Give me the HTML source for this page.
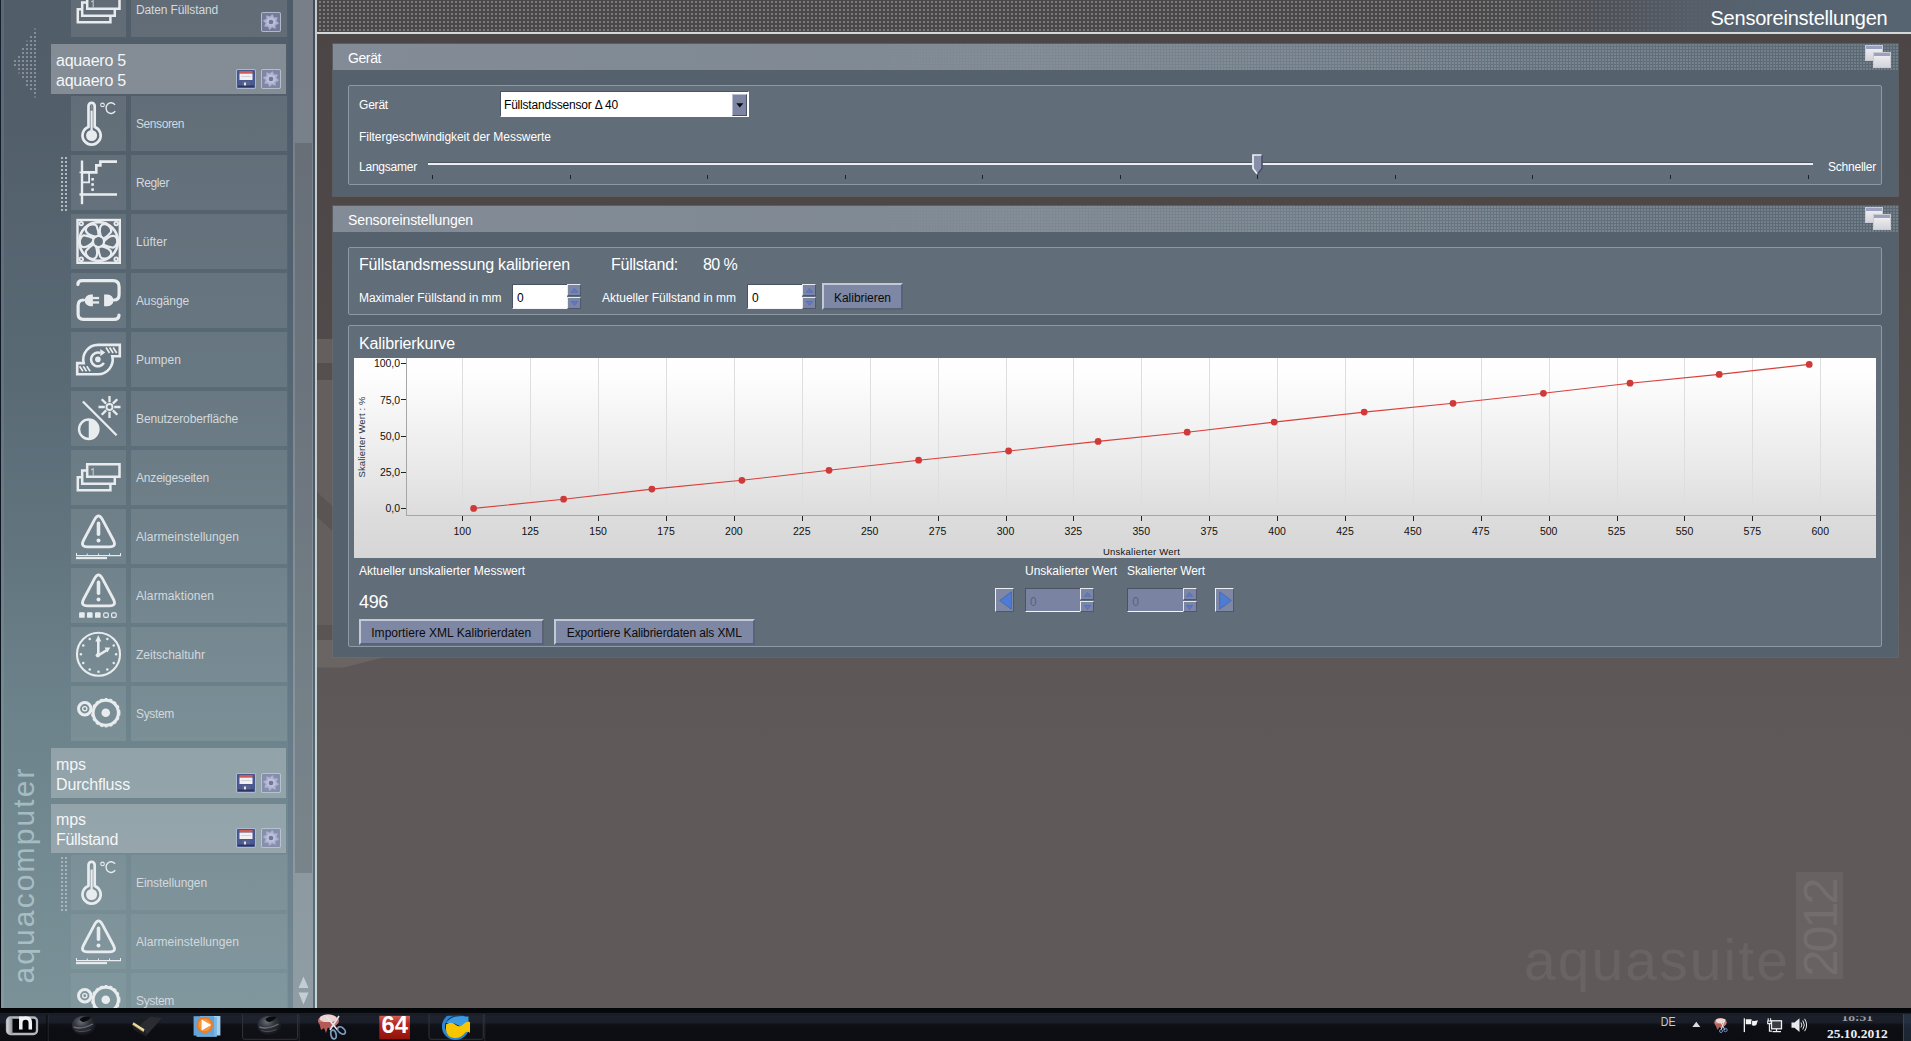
<!DOCTYPE html>
<html><head><meta charset="utf-8"><title>aquasuite 2012</title>
<style>
html,body{margin:0;padding:0;}
body{width:1911px;height:1041px;overflow:hidden;position:relative;background:#5f5a59;font-family:"Liberation Sans",sans-serif;}
.t{position:absolute;white-space:nowrap;line-height:1;font-family:"Liberation Sans",sans-serif;}
.abs{position:absolute;}
svg{position:absolute;overflow:visible;}
</style></head><body>

<div class="abs" style="left:317px;top:0;width:1594px;height:1008px;background:linear-gradient(to bottom,#4b4545 0px,#4d4747 200px,#524c4b 440px,#585352 560px,#5d5857 660px,#5f5a59 780px,#5f5a59 1008px);"></div>
<div style="position:absolute;left:317px;top:339px;width:17px;height:320px;background:#645e5c;"></div>
<div style="position:absolute;left:317px;top:363px;width:17px;height:17px;background:#554f4e;"></div>
<div style="position:absolute;left:317px;top:625px;width:17px;height:16px;background:#5a5453;"></div>
<svg style="left:0;top:0" width="500" height="700" viewBox="0 0 500 700"><path d="M317 640 H334 V657 H385 L344 667.500 H317 Z" fill="#6a6462"/><path d="M317 492 L334 508 V532 L317 517 Z" fill="#5a5453"/></svg>
<div class="abs" style="left:317px;top:0;width:1594px;height:32px;background:linear-gradient(to right,#4a4848 0,#4a4848 1150px,#4f5259 1290px,#555d68 1370px,#566471 1450px);"></div>
<svg style="left:319px;top:1px" width="1592" height="31" viewBox="0 0 1592 31"><defs><pattern id="hd" width="4" height="4" patternUnits="userSpaceOnUse"><rect width="2" height="2" fill="#7b7b7b"/></pattern><linearGradient id="hdg" x1="0" y1="0" x2="1592" y2="0" gradientUnits="userSpaceOnUse"><stop offset="0" stop-color="#fff"/><stop offset="0.74" stop-color="#fff"/><stop offset="0.885" stop-color="#000"/></linearGradient><mask id="hdm"><rect width="1592" height="31" fill="url(#hdg)"/></mask></defs><rect width="1592" height="31" fill="url(#hd)" mask="url(#hdm)"/></svg>
<div style="position:absolute;left:317px;top:32px;width:1594px;height:2px;background:#d3d8d8;"></div>
<div class="t" style="right:23.50px;top:8.07px;font-size:20px;color:#fff;letter-spacing:-0.223px;">Sensoreinstellungen</div>
<div class="abs" style="left:333px;top:44px;width:1565px;height:152px;background:#55626e;box-shadow:0 0 0 1px rgba(105,112,122,0.55);"></div>
<div class="abs" style="left:333px;top:44px;width:1565px;height:26px;background:linear-gradient(to right,#828b96 0,#7f8994 700px,#64727d 1200px,#596773 1565px);"></div>
<div class="abs" style="left:333px;top:44px;width:1565px;height:26px;background-image:radial-gradient(circle at 1px 1px,rgba(255,255,255,0.145) 0.9px,rgba(255,255,255,0) 1.1px);background-size:3px 3px;-webkit-mask-image:linear-gradient(to right,transparent 0,transparent 500px,#000 1100px);mask-image:linear-gradient(to right,transparent 0,transparent 500px,#000 1100px);"></div>
<div class="t" style="left:348.00px;top:51.15px;font-size:14px;color:#fff;letter-spacing:-0.403px;">Gerät</div>
<svg style="left:1865px;top:45px" width="26" height="24" viewBox="0 0 26 24"><defs><linearGradient id="wg44" x1="0" y1="0" x2="0" y2="1"><stop offset="0" stop-color="#f4f4f6"/><stop offset="1" stop-color="#d2d3d8"/></linearGradient></defs><rect x="0.5" y="0.5" width="17" height="15" fill="url(#wg44)" stroke="#c9cad2" stroke-width="1"/><rect x="1" y="1" width="16" height="3" fill="#9aa0bd"/><rect x="8.5" y="7.5" width="17" height="15" fill="url(#wg44)" stroke="#c9cad2" stroke-width="1"/><rect x="9" y="8" width="16" height="3" fill="#9aa0bd"/></svg>
<div class="abs" style="left:348px;top:85px;width:1534px;height:100px;box-sizing:border-box;background:#616d79;border:1px solid #8d9aa5;border-radius:2px;"></div>
<div class="abs" style="left:333px;top:206px;width:1565px;height:451px;background:#55626e;box-shadow:0 0 0 1px rgba(105,112,122,0.55);"></div>
<div class="abs" style="left:333px;top:206px;width:1565px;height:26px;background:linear-gradient(to right,#828b96 0,#7f8994 700px,#64727d 1200px,#596773 1565px);"></div>
<div class="abs" style="left:333px;top:206px;width:1565px;height:26px;background-image:radial-gradient(circle at 1px 1px,rgba(255,255,255,0.145) 0.9px,rgba(255,255,255,0) 1.1px);background-size:3px 3px;-webkit-mask-image:linear-gradient(to right,transparent 0,transparent 500px,#000 1100px);mask-image:linear-gradient(to right,transparent 0,transparent 500px,#000 1100px);"></div>
<div class="t" style="left:348.00px;top:213.15px;font-size:14px;color:#fff;letter-spacing:-0.098px;">Sensoreinstellungen</div>
<svg style="left:1865px;top:207px" width="26" height="24" viewBox="0 0 26 24"><defs><linearGradient id="wg206" x1="0" y1="0" x2="0" y2="1"><stop offset="0" stop-color="#f4f4f6"/><stop offset="1" stop-color="#d2d3d8"/></linearGradient></defs><rect x="0.5" y="0.5" width="17" height="15" fill="url(#wg206)" stroke="#c9cad2" stroke-width="1"/><rect x="1" y="1" width="16" height="3" fill="#9aa0bd"/><rect x="8.5" y="7.5" width="17" height="15" fill="url(#wg206)" stroke="#c9cad2" stroke-width="1"/><rect x="9" y="8" width="16" height="3" fill="#9aa0bd"/></svg>
<div class="abs" style="left:348px;top:247px;width:1534px;height:68px;box-sizing:border-box;background:#616d79;border:1px solid #8d9aa5;border-radius:2px;"></div>
<div class="abs" style="left:348px;top:325px;width:1534px;height:322px;box-sizing:border-box;background:#616d79;border:1px solid #8d9aa5;border-radius:2px;"></div>
<div class="t" style="left:359.00px;top:99.44px;font-size:12px;color:#fff;letter-spacing:-0.202px;">Gerät</div>
<div class="abs" style="left:499.600px;top:91.300px;width:249px;height:25.800px;box-sizing:border-box;background:#fff;border-top:1.600px solid #4a5266;border-left:1.600px solid #4a5266;border-right:1.500px solid #fff;border-bottom:1.500px solid #fff;"></div>
<div class="abs" style="left:731.900px;top:93.600px;width:14.900px;height:22px;box-sizing:border-box;background:#7c85a2;border:1.300px solid #b9bfd0;border-right:1.600px solid #4a5068;border-bottom:1.600px solid #4a5068;"></div>
<svg style="left:735.600px;top:102.800px" width="8" height="5" viewBox="0 0 8 5"><path d="M0.300 0.300 L7.300 0.300 L3.800 4.500 Z" fill="#0a0a0a"/></svg>
<div class="t" style="left:504.00px;top:99.44px;font-size:12px;color:#000;letter-spacing:-0.194px;">Füllstandssensor Δ 40</div>
<div class="t" style="left:359.00px;top:130.84px;font-size:12px;color:#fff;letter-spacing:-0.040px;">Filtergeschwindigkeit der Messwerte</div>
<div class="t" style="left:359.00px;top:161.34px;font-size:12px;color:#fff;letter-spacing:-0.226px;">Langsamer</div>
<div class="t" style="left:1828.00px;top:161.34px;font-size:12px;color:#fff;letter-spacing:-0.225px;">Schneller</div>
<div style="position:absolute;left:428px;top:161.7px;width:1385px;height:1.3px;background:#4a5462;"></div>
<div style="position:absolute;left:428px;top:163px;width:1385px;height:1.7px;background:#eaedf1;"></div>
<div style="position:absolute;left:432px;top:175px;width:1px;height:4px;background:#1d2228;"></div>
<div style="position:absolute;left:569.55px;top:175px;width:1px;height:4px;background:#1d2228;"></div>
<div style="position:absolute;left:707.1px;top:175px;width:1px;height:4px;background:#1d2228;"></div>
<div style="position:absolute;left:844.65px;top:175px;width:1px;height:4px;background:#1d2228;"></div>
<div style="position:absolute;left:982.2px;top:175px;width:1px;height:4px;background:#1d2228;"></div>
<div style="position:absolute;left:1119.75px;top:175px;width:1px;height:4px;background:#1d2228;"></div>
<div style="position:absolute;left:1257.3px;top:175px;width:1px;height:4px;background:#1d2228;"></div>
<div style="position:absolute;left:1394.85px;top:175px;width:1px;height:4px;background:#1d2228;"></div>
<div style="position:absolute;left:1532.4px;top:175px;width:1px;height:4px;background:#1d2228;"></div>
<div style="position:absolute;left:1669.95px;top:175px;width:1px;height:4px;background:#1d2228;"></div>
<div style="position:absolute;left:1807.5px;top:175px;width:1px;height:4px;background:#1d2228;"></div>
<svg style="left:1252px;top:154px" width="11" height="21" viewBox="0 0 11 21"><path d="M0.800 0.800 H10 V14.500 L5.300 20.300 L0.800 14.500 Z" fill="#868ea8"/><path d="M10 1 V14.500 L5.300 20.300" fill="none" stroke="#4a5069" stroke-width="1.600"/><path d="M9.500 1 H1 V14.500 L5 19.800" fill="none" stroke="#eef0f6" stroke-width="1.700"/></svg>
<div class="t" style="left:359.00px;top:257.46px;font-size:16px;color:#fff;letter-spacing:-0.176px;">Füllstandsmessung kalibrieren</div>
<div class="t" style="left:611.00px;top:257.46px;font-size:16px;color:#fff;letter-spacing:-0.237px;">Füllstand:</div>
<div class="t" style="left:703.00px;top:257.46px;font-size:16px;color:#fff;letter-spacing:-0.617px;">80 %</div>
<div class="t" style="left:359.00px;top:291.84px;font-size:12px;color:#fff;letter-spacing:-0.035px;">Maximaler Füllstand in mm</div>
<div class="t" style="left:602.00px;top:291.84px;font-size:12px;color:#fff;letter-spacing:-0.029px;">Aktueller Füllstand in mm</div>
<div class="abs" style="left:512.3px;top:284.4px;width:54.9px;height:24.4px;box-sizing:border-box;background:#fff;border-top:1.600px solid #4a5266;border-left:1.600px solid #4a5266;border-bottom:1.400px solid #f2f4f8;border-right:0;"></div>
<div class="t" style="left:517.10px;top:291.94px;font-size:12px;color:#000;letter-spacing:-0.174px;">0</div>
<div class="abs" style="left:567.2px;top:284.4px;width:14.1px;height:11.6px;box-sizing:border-box;background:#7c86a4;border:1.500px solid #e6e9f0;border-right-color:#50576f;border-bottom-color:#50576f;"></div>
<svg style="left:570.7px;top:288px" width="7" height="5" viewBox="0 0 7 5"><path d="M0.300 4.300 L3.500 0.400 L6.700 4.300 Z" fill="#5b7bd0" stroke="#4763b0" stroke-width="0.500"/></svg>
<div class="abs" style="left:567.2px;top:297.2px;width:14.1px;height:11.6px;box-sizing:border-box;background:#7c86a4;border:1.500px solid #e6e9f0;border-right-color:#50576f;border-bottom-color:#50576f;"></div>
<svg style="left:570.7px;top:301px" width="7" height="5" viewBox="0 0 7 5"><path d="M0.300 0.500 L3.500 4.400 L6.700 0.500 Z" fill="#5b7bd0" stroke="#4763b0" stroke-width="0.500"/></svg>
<div class="abs" style="left:747.3px;top:284.4px;width:54.9px;height:24.4px;box-sizing:border-box;background:#fff;border-top:1.600px solid #4a5266;border-left:1.600px solid #4a5266;border-bottom:1.400px solid #f2f4f8;border-right:0;"></div>
<div class="t" style="left:752.10px;top:291.94px;font-size:12px;color:#000;letter-spacing:-0.174px;">0</div>
<div class="abs" style="left:802.2px;top:284.4px;width:14.1px;height:11.6px;box-sizing:border-box;background:#7c86a4;border:1.500px solid #e6e9f0;border-right-color:#50576f;border-bottom-color:#50576f;"></div>
<svg style="left:805.7px;top:288px" width="7" height="5" viewBox="0 0 7 5"><path d="M0.300 4.300 L3.500 0.400 L6.700 4.300 Z" fill="#5b7bd0" stroke="#4763b0" stroke-width="0.500"/></svg>
<div class="abs" style="left:802.2px;top:297.2px;width:14.1px;height:11.6px;box-sizing:border-box;background:#7c86a4;border:1.500px solid #e6e9f0;border-right-color:#50576f;border-bottom-color:#50576f;"></div>
<svg style="left:805.7px;top:301px" width="7" height="5" viewBox="0 0 7 5"><path d="M0.300 0.500 L3.500 4.400 L6.700 0.500 Z" fill="#5b7bd0" stroke="#4763b0" stroke-width="0.500"/></svg>
<div class="abs" style="left:822px;top:283px;width:81px;height:27px;box-sizing:border-box;background:#7e87a4;border:2px solid #c3c8d6;border-right-color:#5a6179;border-bottom-color:#5a6179;"></div>
<div class="t" style="left:834.00px;top:291.64px;font-size:12px;color:#0b0b0b;letter-spacing:-0.033px;">Kalibrieren</div>
<div class="t" style="left:359.00px;top:335.96px;font-size:16px;color:#fff;letter-spacing:-0.129px;">Kalibrierkurve</div>
<div class="abs" style="left:354px;top:358px;width:1522px;height:200px;background:linear-gradient(to bottom,#ffffff 0,#fdfdfd 20px,#e9e9e9 110px,#dcdcdc 160px,#d6d6d6 200px);"></div>
<svg style="left:0;top:0" width="1911" height="1041" viewBox="0 0 1911 1041"><line x1="462.5" y1="358" x2="462.5" y2="515.5" stroke="#dedede" stroke-width="1"/><line x1="462.5" y1="516" x2="462.5" y2="521" stroke="#222" stroke-width="1"/><line x1="530.5" y1="358" x2="530.5" y2="515.5" stroke="#dedede" stroke-width="1"/><line x1="530.5" y1="516" x2="530.5" y2="521" stroke="#222" stroke-width="1"/><line x1="598.5" y1="358" x2="598.5" y2="515.5" stroke="#dedede" stroke-width="1"/><line x1="598.5" y1="516" x2="598.5" y2="521" stroke="#222" stroke-width="1"/><line x1="666.5" y1="358" x2="666.5" y2="515.5" stroke="#dedede" stroke-width="1"/><line x1="666.5" y1="516" x2="666.5" y2="521" stroke="#222" stroke-width="1"/><line x1="734.5" y1="358" x2="734.5" y2="515.5" stroke="#dedede" stroke-width="1"/><line x1="734.5" y1="516" x2="734.5" y2="521" stroke="#222" stroke-width="1"/><line x1="802.5" y1="358" x2="802.5" y2="515.5" stroke="#dedede" stroke-width="1"/><line x1="802.5" y1="516" x2="802.5" y2="521" stroke="#222" stroke-width="1"/><line x1="870.5" y1="358" x2="870.5" y2="515.5" stroke="#dedede" stroke-width="1"/><line x1="870.5" y1="516" x2="870.5" y2="521" stroke="#222" stroke-width="1"/><line x1="938.5" y1="358" x2="938.5" y2="515.5" stroke="#dedede" stroke-width="1"/><line x1="938.5" y1="516" x2="938.5" y2="521" stroke="#222" stroke-width="1"/><line x1="1006.5" y1="358" x2="1006.5" y2="515.5" stroke="#dedede" stroke-width="1"/><line x1="1006.5" y1="516" x2="1006.5" y2="521" stroke="#222" stroke-width="1"/><line x1="1073.5" y1="358" x2="1073.5" y2="515.5" stroke="#dedede" stroke-width="1"/><line x1="1073.5" y1="516" x2="1073.5" y2="521" stroke="#222" stroke-width="1"/><line x1="1141.5" y1="358" x2="1141.5" y2="515.5" stroke="#dedede" stroke-width="1"/><line x1="1141.5" y1="516" x2="1141.5" y2="521" stroke="#222" stroke-width="1"/><line x1="1209.5" y1="358" x2="1209.5" y2="515.5" stroke="#dedede" stroke-width="1"/><line x1="1209.5" y1="516" x2="1209.5" y2="521" stroke="#222" stroke-width="1"/><line x1="1277.5" y1="358" x2="1277.5" y2="515.5" stroke="#dedede" stroke-width="1"/><line x1="1277.5" y1="516" x2="1277.5" y2="521" stroke="#222" stroke-width="1"/><line x1="1345.5" y1="358" x2="1345.5" y2="515.5" stroke="#dedede" stroke-width="1"/><line x1="1345.5" y1="516" x2="1345.5" y2="521" stroke="#222" stroke-width="1"/><line x1="1413.5" y1="358" x2="1413.5" y2="515.5" stroke="#dedede" stroke-width="1"/><line x1="1413.5" y1="516" x2="1413.5" y2="521" stroke="#222" stroke-width="1"/><line x1="1481.5" y1="358" x2="1481.5" y2="515.5" stroke="#dedede" stroke-width="1"/><line x1="1481.5" y1="516" x2="1481.5" y2="521" stroke="#222" stroke-width="1"/><line x1="1549.5" y1="358" x2="1549.5" y2="515.5" stroke="#dedede" stroke-width="1"/><line x1="1549.5" y1="516" x2="1549.5" y2="521" stroke="#222" stroke-width="1"/><line x1="1617.5" y1="358" x2="1617.5" y2="515.5" stroke="#dedede" stroke-width="1"/><line x1="1617.5" y1="516" x2="1617.5" y2="521" stroke="#222" stroke-width="1"/><line x1="1684.5" y1="358" x2="1684.5" y2="515.5" stroke="#dedede" stroke-width="1"/><line x1="1684.5" y1="516" x2="1684.5" y2="521" stroke="#222" stroke-width="1"/><line x1="1752.5" y1="358" x2="1752.5" y2="515.5" stroke="#dedede" stroke-width="1"/><line x1="1752.5" y1="516" x2="1752.5" y2="521" stroke="#222" stroke-width="1"/><line x1="1820.5" y1="358" x2="1820.5" y2="515.5" stroke="#dedede" stroke-width="1"/><line x1="1820.5" y1="516" x2="1820.5" y2="521" stroke="#222" stroke-width="1"/><line x1="406.5" y1="358" x2="406.5" y2="516" stroke="#a6a6a6" stroke-width="1"/><line x1="406" y1="515.5" x2="1876" y2="515.5" stroke="#a6a6a6" stroke-width="1"/><line x1="401" y1="508.5" x2="406" y2="508.5" stroke="#222" stroke-width="1"/><line x1="401" y1="472.5" x2="406" y2="472.5" stroke="#222" stroke-width="1"/><line x1="401" y1="436.5" x2="406" y2="436.5" stroke="#222" stroke-width="1"/><line x1="401" y1="399.5" x2="406" y2="399.5" stroke="#222" stroke-width="1"/><line x1="401" y1="363.5" x2="406" y2="363.5" stroke="#222" stroke-width="1"/><polyline fill="none" stroke="#d8403c" stroke-width="1.1" points="473.6,508.4 563.6,499.2 651.9,489.1 741.9,480.3 829.0,470.3 918.6,460.2 1008.6,451.0 1098.1,441.4 1187.2,432.2 1274.2,422.1 1364.2,412.1 1453.0,403.3 1543.4,393.3 1630.0,383.2 1719.2,374.4 1809.2,364.4"/><circle cx="473.6" cy="508.4" r="3.4" fill="#cf3a38"/><circle cx="563.6" cy="499.2" r="3.4" fill="#cf3a38"/><circle cx="651.9" cy="489.1" r="3.4" fill="#cf3a38"/><circle cx="741.9" cy="480.3" r="3.4" fill="#cf3a38"/><circle cx="829.0" cy="470.3" r="3.4" fill="#cf3a38"/><circle cx="918.6" cy="460.2" r="3.4" fill="#cf3a38"/><circle cx="1008.6" cy="451.0" r="3.4" fill="#cf3a38"/><circle cx="1098.1" cy="441.4" r="3.4" fill="#cf3a38"/><circle cx="1187.2" cy="432.2" r="3.4" fill="#cf3a38"/><circle cx="1274.2" cy="422.1" r="3.4" fill="#cf3a38"/><circle cx="1364.2" cy="412.1" r="3.4" fill="#cf3a38"/><circle cx="1453.0" cy="403.3" r="3.4" fill="#cf3a38"/><circle cx="1543.4" cy="393.3" r="3.4" fill="#cf3a38"/><circle cx="1630.0" cy="383.2" r="3.4" fill="#cf3a38"/><circle cx="1719.2" cy="374.4" r="3.4" fill="#cf3a38"/><circle cx="1809.2" cy="364.4" r="3.4" fill="#cf3a38"/></svg>
<div class="t" style="left:453.50px;top:526.11px;font-size:10.5px;color:#111;letter-spacing:0.027px;">100</div>
<div class="t" style="left:521.40px;top:526.11px;font-size:10.5px;color:#111;letter-spacing:0.027px;">125</div>
<div class="t" style="left:589.30px;top:526.11px;font-size:10.5px;color:#111;letter-spacing:0.027px;">150</div>
<div class="t" style="left:657.20px;top:526.11px;font-size:10.5px;color:#111;letter-spacing:0.027px;">175</div>
<div class="t" style="left:725.10px;top:526.11px;font-size:10.5px;color:#111;letter-spacing:0.027px;">200</div>
<div class="t" style="left:793.00px;top:526.11px;font-size:10.5px;color:#111;letter-spacing:0.027px;">225</div>
<div class="t" style="left:860.90px;top:526.11px;font-size:10.5px;color:#111;letter-spacing:0.027px;">250</div>
<div class="t" style="left:928.80px;top:526.11px;font-size:10.5px;color:#111;letter-spacing:0.027px;">275</div>
<div class="t" style="left:996.70px;top:526.11px;font-size:10.5px;color:#111;letter-spacing:0.027px;">300</div>
<div class="t" style="left:1064.60px;top:526.11px;font-size:10.5px;color:#111;letter-spacing:0.027px;">325</div>
<div class="t" style="left:1132.50px;top:526.11px;font-size:10.5px;color:#111;letter-spacing:0.027px;">350</div>
<div class="t" style="left:1200.40px;top:526.11px;font-size:10.5px;color:#111;letter-spacing:0.027px;">375</div>
<div class="t" style="left:1268.30px;top:526.11px;font-size:10.5px;color:#111;letter-spacing:0.027px;">400</div>
<div class="t" style="left:1336.20px;top:526.11px;font-size:10.5px;color:#111;letter-spacing:0.027px;">425</div>
<div class="t" style="left:1404.10px;top:526.11px;font-size:10.5px;color:#111;letter-spacing:0.027px;">450</div>
<div class="t" style="left:1472.00px;top:526.11px;font-size:10.5px;color:#111;letter-spacing:0.027px;">475</div>
<div class="t" style="left:1539.90px;top:526.11px;font-size:10.5px;color:#111;letter-spacing:0.027px;">500</div>
<div class="t" style="left:1607.80px;top:526.11px;font-size:10.5px;color:#111;letter-spacing:0.027px;">525</div>
<div class="t" style="left:1675.70px;top:526.11px;font-size:10.5px;color:#111;letter-spacing:0.027px;">550</div>
<div class="t" style="left:1743.60px;top:526.11px;font-size:10.5px;color:#111;letter-spacing:0.027px;">575</div>
<div class="t" style="left:1811.50px;top:526.11px;font-size:10.5px;color:#111;letter-spacing:0.027px;">600</div>
<div class="t" style="left:385.40px;top:503.11px;font-size:10.5px;color:#111;letter-spacing:0.001px;">0,0</div>
<div class="t" style="left:380.00px;top:466.91px;font-size:10.5px;color:#111;letter-spacing:-0.109px;">25,0</div>
<div class="t" style="left:380.00px;top:430.71px;font-size:10.5px;color:#111;letter-spacing:-0.109px;">50,0</div>
<div class="t" style="left:380.00px;top:394.51px;font-size:10.5px;color:#111;letter-spacing:-0.109px;">75,0</div>
<div class="t" style="left:374.00px;top:358.31px;font-size:10.5px;color:#111;letter-spacing:-0.055px;">100,0</div>
<div class="t" style="left:1103.00px;top:546.96px;font-size:9.5px;color:#111;letter-spacing:0.223px;">Unskalierter Wert</div>
<div class="t" style="left:361.5px;top:437px;font-size:9.5px;color:#2c343d;transform:translate(-50%,-50%) rotate(-90deg);letter-spacing:0.1px;">Skalierter Wert : %</div>
<div class="t" style="left:359.00px;top:565.34px;font-size:12px;color:#fff;letter-spacing:-0.023px;">Aktueller unskalierter Messwert</div>
<div class="t" style="left:359.00px;top:592.76px;font-size:18px;color:#fff;letter-spacing:-0.344px;">496</div>
<div class="abs" style="left:359px;top:618.5px;width:184.5px;height:26.5px;box-sizing:border-box;background:#7e87a4;border:2px solid #c3c8d6;border-right-color:#5a6179;border-bottom-color:#5a6179;"></div>
<div class="t" style="left:371.25px;top:626.89px;font-size:12px;color:#0b0b0b;letter-spacing:0.036px;">Importiere XML Kalibrierdaten</div>
<div class="abs" style="left:554px;top:618.5px;width:200.5px;height:26.5px;box-sizing:border-box;background:#7e87a4;border:2px solid #c3c8d6;border-right-color:#5a6179;border-bottom-color:#5a6179;"></div>
<div class="t" style="left:566.75px;top:626.89px;font-size:12px;color:#0b0b0b;letter-spacing:-0.114px;">Exportiere Kalibrierdaten als XML</div>
<div class="t" style="left:1025.00px;top:565.34px;font-size:12px;color:#fff;letter-spacing:-0.027px;">Unskalierter Wert</div>
<div class="t" style="left:1127.00px;top:565.34px;font-size:12px;color:#fff;letter-spacing:-0.075px;">Skalierter Wert</div>
<div class="abs" style="left:995.4px;top:588.2px;width:19.1px;height:23.9px;box-sizing:border-box;background:#7e87a4;border:1.800px solid #eceff5;border-right-color:#50576f;border-bottom-color:#50576f;"></div>
<svg style="left:998.6px;top:591px" width="13" height="19" viewBox="0 0 13 19"><path d="M12.300 0.800 L12.300 18.200 L0.700 9.500 Z" fill="#4f7cd2" stroke="#3f63b4" stroke-width="0.800"/></svg>
<div class="abs" style="left:1025.2px;top:588.2px;width:55.2px;height:24.2px;box-sizing:border-box;background:#7a84a2;border-top:1.600px solid #4a5266;border-left:1.600px solid #4a5266;border-bottom:1.400px solid #f2f4f8;border-right:0;"></div>
<div class="t" style="left:1030.00px;top:595.54px;font-size:12px;color:#586289;letter-spacing:-0.174px;">0</div>
<div class="abs" style="left:1080.4px;top:588.2px;width:14.1px;height:11.5px;box-sizing:border-box;background:#7c86a4;border:1.500px solid #e6e9f0;border-right-color:#50576f;border-bottom-color:#50576f;"></div>
<svg style="left:1083.9px;top:591.8px" width="7" height="5" viewBox="0 0 7 5"><path d="M0.300 4.300 L3.500 0.400 L6.700 4.300 Z" fill="#5b7bd0" stroke="#4763b0" stroke-width="0.500"/></svg>
<div class="abs" style="left:1080.4px;top:600.9px;width:14.1px;height:11.5px;box-sizing:border-box;background:#7c86a4;border:1.500px solid #e6e9f0;border-right-color:#50576f;border-bottom-color:#50576f;"></div>
<svg style="left:1083.9px;top:604.7px" width="7" height="5" viewBox="0 0 7 5"><path d="M0.300 0.500 L3.500 4.400 L6.700 0.500 Z" fill="#5b7bd0" stroke="#4763b0" stroke-width="0.500"/></svg>
<div class="abs" style="left:1127.4px;top:588.2px;width:55.2px;height:24.2px;box-sizing:border-box;background:#7a84a2;border-top:1.600px solid #4a5266;border-left:1.600px solid #4a5266;border-bottom:1.400px solid #f2f4f8;border-right:0;"></div>
<div class="t" style="left:1132.20px;top:595.54px;font-size:12px;color:#586289;letter-spacing:-0.174px;">0</div>
<div class="abs" style="left:1182.6px;top:588.2px;width:14.1px;height:11.5px;box-sizing:border-box;background:#7c86a4;border:1.500px solid #e6e9f0;border-right-color:#50576f;border-bottom-color:#50576f;"></div>
<svg style="left:1186.1px;top:591.8px" width="7" height="5" viewBox="0 0 7 5"><path d="M0.300 4.300 L3.500 0.400 L6.700 4.300 Z" fill="#5b7bd0" stroke="#4763b0" stroke-width="0.500"/></svg>
<div class="abs" style="left:1182.6px;top:600.9px;width:14.1px;height:11.5px;box-sizing:border-box;background:#7c86a4;border:1.500px solid #e6e9f0;border-right-color:#50576f;border-bottom-color:#50576f;"></div>
<svg style="left:1186.1px;top:604.7px" width="7" height="5" viewBox="0 0 7 5"><path d="M0.300 0.500 L3.500 4.400 L6.700 0.500 Z" fill="#5b7bd0" stroke="#4763b0" stroke-width="0.500"/></svg>
<div class="abs" style="left:1214.9px;top:588.2px;width:19.6px;height:23.9px;box-sizing:border-box;background:#7e87a4;border:1.800px solid #eceff5;border-right-color:#50576f;border-bottom-color:#50576f;"></div>
<svg style="left:1218.5px;top:591px" width="13" height="19" viewBox="0 0 13 19"><path d="M0.700 0.800 L0.700 18.200 L12.300 9.500 Z" fill="#4f7cd2" stroke="#3f63b4" stroke-width="0.800"/></svg>
<div class="t" style="left:1524.00px;top:931.75px;font-size:57px;color:rgba(255,255,255,0.062);letter-spacing:2.088px;font-weight:normal;">aquasuite</div>
<div style="position:absolute;left:1796px;top:872px;width:47px;height:107px;background:rgba(255,255,255,0.06);"></div>
<svg style="left:0;top:0" width="1911" height="1008" viewBox="0 0 1911 1008"><text transform="translate(1836.500 976.500) rotate(-90)" font-family="Liberation Sans, sans-serif" font-size="48.500" fill="rgba(255,255,255,0.075)" textLength="99" lengthAdjust="spacing">2012</text></svg>
<div class="abs" style="left:0;top:0;width:317px;height:1008px;background:linear-gradient(to bottom,#515d69 0,#525f6b 120px,#596a75 380px,#62757f 550px,#6d838c 720px,#758b93 880px,#7a9198 1008px);"></div>
<div style="position:absolute;left:0px;top:0px;width:1px;height:1008px;background:linear-gradient(to bottom,#142030,#060b12);"></div>
<div style="position:absolute;left:1px;top:0px;width:3px;height:1008px;background:rgba(255,255,255,0.07);"></div>
<div style="position:absolute;left:287.5px;top:0px;width:5.5px;height:1008px;background:rgba(60,80,105,0.130);"></div>
<div style="position:absolute;left:293px;top:0px;width:20.2px;height:1008px;background:rgba(175,175,182,0.420);"></div>
<div style="position:absolute;left:295px;top:143px;width:17px;height:730px;background:rgba(0,0,0,0.135);"></div>
<div style="position:absolute;left:313.2px;top:0px;width:1.5px;height:1008px;background:rgba(40,50,60,0.350);"></div>
<div style="position:absolute;left:314.7px;top:0px;width:2.5px;height:1008px;background:linear-gradient(to bottom,#c5c9cd,#c3d5d7);"></div>
<svg style="left:298px;top:976px" width="11" height="30" viewBox="0 0 11 30"><path d="M0.500 12 L5.500 0.500 L10.500 12 Z" fill="#c3ced3"/><path d="M0.500 16.500 L5.500 28.500 L10.500 16.500 Z" fill="#c3ced3"/></svg>
<div style="position:absolute;left:71px;top:-18px;width:55px;height:55px;background:rgba(255,255,255,0.095);"></div>
<div style="position:absolute;left:131px;top:-18px;width:155.5px;height:55px;background:rgba(255,255,255,0.095);"></div>
<div class="t" style="left:136.00px;top:4.34px;font-size:12px;color:#d3d9dd;letter-spacing:-0.136px;">Daten Füllstand</div>
<svg style="left:71px;top:-18px" width="55" height="55" viewBox="0 0 55 55"><g fill="none" stroke="#e9ecee" stroke-width="2.500" stroke-linejoin="miter">
<path d="M16.200 14.200 H48.500 V26.800 H16.200 Z"/>
<path d="M16.200 20.500 H11.200 V33.700 H43.800 V26.800"/>
<path d="M11.200 27.300 H6.800 V40.300 H39.400 V33.700"/></g>
<path d="M20.200 20 l2 -1.400 v6.800" fill="none" stroke="#e9ecee" stroke-width="1.100" opacity="0.700"/></svg>
<div class="abs" style="left:261px;top:12px;width:20px;height:20px;box-sizing:border-box;background:rgba(125,130,172,0.620);border:1px solid rgba(215,228,235,0.600);border-radius:2px;"></div>
<svg style="left:261px;top:12px" width="20" height="20" viewBox="0 0 20 20"><polygon points="17.07,11.37 13.84,12.54 14.03,15.97 10.92,14.51 8.63,17.07 7.46,13.84 4.03,14.03 5.49,10.92 2.93,8.63 6.16,7.46 5.97,4.03 9.08,5.49 11.37,2.93 12.54,6.16 15.97,5.97 14.51,9.08" fill="#c6c7df" stroke="#b0b4d2" stroke-width="1.400" opacity="0.900" stroke-linejoin="round"/><circle cx="10" cy="10" r="2.300" fill="#6f77a0"/></svg>
<svg style="left:0;top:0" width="60" height="110" viewBox="0 0 60 110" shape-rendering="crispEdges"><rect x="34" y="28" width="2" height="2" fill="rgba(255,255,255,0.16)"/><rect x="34" y="32" width="2" height="2" fill="rgba(255,255,255,0.30)"/><rect x="34" y="36" width="2" height="2" fill="rgba(255,255,255,0.30)"/><rect x="34" y="40" width="2" height="2" fill="rgba(255,255,255,0.30)"/><rect x="34" y="44" width="2" height="2" fill="rgba(255,255,255,0.30)"/><rect x="34" y="48" width="2" height="2" fill="rgba(255,255,255,0.30)"/><rect x="34" y="52" width="2" height="2" fill="rgba(255,255,255,0.30)"/><rect x="34" y="56" width="2" height="2" fill="rgba(255,255,255,0.30)"/><rect x="34" y="60" width="2" height="2" fill="rgba(255,255,255,0.30)"/><rect x="34" y="64" width="2" height="2" fill="rgba(255,255,255,0.30)"/><rect x="34" y="68" width="2" height="2" fill="rgba(255,255,255,0.30)"/><rect x="34" y="72" width="2" height="2" fill="rgba(255,255,255,0.30)"/><rect x="34" y="76" width="2" height="2" fill="rgba(255,255,255,0.30)"/><rect x="34" y="80" width="2" height="2" fill="rgba(255,255,255,0.30)"/><rect x="34" y="84" width="2" height="2" fill="rgba(255,255,255,0.30)"/><rect x="34" y="88" width="2" height="2" fill="rgba(255,255,255,0.30)"/><rect x="34" y="92" width="2" height="2" fill="rgba(255,255,255,0.30)"/><rect x="34" y="96" width="2" height="2" fill="rgba(255,255,255,0.16)"/><rect x="30" y="36" width="2" height="2" fill="rgba(255,255,255,0.30)"/><rect x="30" y="40" width="2" height="2" fill="rgba(255,255,255,0.30)"/><rect x="30" y="44" width="2" height="2" fill="rgba(255,255,255,0.30)"/><rect x="30" y="48" width="2" height="2" fill="rgba(255,255,255,0.30)"/><rect x="30" y="52" width="2" height="2" fill="rgba(255,255,255,0.30)"/><rect x="30" y="56" width="2" height="2" fill="rgba(255,255,255,0.30)"/><rect x="30" y="60" width="2" height="2" fill="rgba(255,255,255,0.30)"/><rect x="30" y="64" width="2" height="2" fill="rgba(255,255,255,0.30)"/><rect x="30" y="68" width="2" height="2" fill="rgba(255,255,255,0.30)"/><rect x="30" y="72" width="2" height="2" fill="rgba(255,255,255,0.30)"/><rect x="30" y="76" width="2" height="2" fill="rgba(255,255,255,0.30)"/><rect x="30" y="80" width="2" height="2" fill="rgba(255,255,255,0.30)"/><rect x="30" y="84" width="2" height="2" fill="rgba(255,255,255,0.30)"/><rect x="30" y="88" width="2" height="2" fill="rgba(255,255,255,0.30)"/><rect x="26" y="44" width="2" height="2" fill="rgba(255,255,255,0.30)"/><rect x="26" y="48" width="2" height="2" fill="rgba(255,255,255,0.30)"/><rect x="26" y="52" width="2" height="2" fill="rgba(255,255,255,0.30)"/><rect x="26" y="56" width="2" height="2" fill="rgba(255,255,255,0.30)"/><rect x="26" y="60" width="2" height="2" fill="rgba(255,255,255,0.30)"/><rect x="26" y="64" width="2" height="2" fill="rgba(255,255,255,0.30)"/><rect x="26" y="68" width="2" height="2" fill="rgba(255,255,255,0.30)"/><rect x="26" y="72" width="2" height="2" fill="rgba(255,255,255,0.30)"/><rect x="26" y="76" width="2" height="2" fill="rgba(255,255,255,0.30)"/><rect x="26" y="80" width="2" height="2" fill="rgba(255,255,255,0.30)"/><rect x="26" y="84" width="2" height="2" fill="rgba(255,255,255,0.30)"/><rect x="22" y="48" width="2" height="2" fill="rgba(255,255,255,0.30)"/><rect x="22" y="52" width="2" height="2" fill="rgba(255,255,255,0.30)"/><rect x="22" y="56" width="2" height="2" fill="rgba(255,255,255,0.30)"/><rect x="22" y="60" width="2" height="2" fill="rgba(255,255,255,0.30)"/><rect x="22" y="64" width="2" height="2" fill="rgba(255,255,255,0.30)"/><rect x="22" y="68" width="2" height="2" fill="rgba(255,255,255,0.30)"/><rect x="22" y="72" width="2" height="2" fill="rgba(255,255,255,0.30)"/><rect x="22" y="76" width="2" height="2" fill="rgba(255,255,255,0.30)"/><rect x="18" y="56" width="2" height="2" fill="rgba(255,255,255,0.30)"/><rect x="18" y="60" width="2" height="2" fill="rgba(255,255,255,0.30)"/><rect x="18" y="64" width="2" height="2" fill="rgba(255,255,255,0.30)"/><rect x="18" y="68" width="2" height="2" fill="rgba(255,255,255,0.30)"/><rect x="14" y="60" width="2" height="2" fill="rgba(255,255,255,0.30)"/><rect x="14" y="64" width="2" height="2" fill="rgba(255,255,255,0.30)"/><rect x="26" y="40" width="2" height="2" fill="rgba(255,255,255,0.120)"/><rect x="18" y="72" width="2" height="2" fill="rgba(255,255,255,0.120)"/></svg>
<div style="position:absolute;left:51px;top:44.2px;width:234.8px;height:49.8px;background:rgba(172,177,184,0.560);"></div>
<div class="t" style="left:56.00px;top:53.16px;font-size:16px;color:#f4f6f7;letter-spacing:-0.229px;">aquaero 5</div>
<div class="t" style="left:56.00px;top:73.16px;font-size:16px;color:#f4f6f7;letter-spacing:-0.229px;">aquaero 5</div>
<div class="abs" style="left:236px;top:68.7px;width:20px;height:20px;box-sizing:border-box;background:#46558c;border:1px solid rgba(215,228,235,0.700);border-radius:2px;"></div>
<svg style="left:236px;top:68.7px" width="20" height="20" viewBox="0 0 20 20"><rect x="2" y="2" width="16" height="16" fill="#4a5a90"/><rect x="3.500" y="2" width="13" height="2.400" fill="#cf5a55"/><rect x="3.500" y="4.600" width="13" height="6.400" fill="#f1f1f4"/><rect x="5" y="7" width="10" height="1" fill="#d0d2dc"/><rect x="6" y="12.500" width="8" height="5.500" fill="#5b6386"/><rect x="8" y="13.500" width="2" height="3.500" fill="#e0e2ea"/><rect x="2" y="16.500" width="16" height="1.500" fill="#2b3564"/></svg>
<div class="abs" style="left:261px;top:68.7px;width:20px;height:20px;box-sizing:border-box;background:rgba(125,130,172,0.620);border:1px solid rgba(215,228,235,0.600);border-radius:2px;"></div>
<svg style="left:261px;top:68.7px" width="20" height="20" viewBox="0 0 20 20"><polygon points="17.07,11.37 13.84,12.54 14.03,15.97 10.92,14.51 8.63,17.07 7.46,13.84 4.03,14.03 5.49,10.92 2.93,8.63 6.16,7.46 5.97,4.03 9.08,5.49 11.37,2.93 12.54,6.16 15.97,5.97 14.51,9.08" fill="#c6c7df" stroke="#b0b4d2" stroke-width="1.400" opacity="0.900" stroke-linejoin="round"/><circle cx="10" cy="10" r="2.300" fill="#6f77a0"/></svg>
<div style="position:absolute;left:71px;top:96px;width:55px;height:55px;background:rgba(255,255,255,0.095);"></div>
<div style="position:absolute;left:131px;top:96px;width:155.5px;height:55px;background:rgba(255,255,255,0.095);"></div>
<svg style="left:71px;top:96px" width="55" height="55" viewBox="0 0 55 55"><path d="M17.500 10 a3.100 3.100 0 0 1 6.200 0 V30.900 a9.100 9.100 0 1 1 -6.200 0 Z" fill="none" stroke="#e9ecee" stroke-width="2.700" stroke-linejoin="round"/>
<circle cx="20.600" cy="39.500" r="5.500" fill="#e9ecee"/><rect x="19.500" y="14.500" width="2.200" height="22" fill="#e9ecee"/><rect x="19.700" y="8.500" width="1.800" height="5" fill="#8a949d"/>
<circle cx="31.500" cy="8.900" r="1.800" fill="none" stroke="#e9ecee" stroke-width="1.100"/>
<path d="M44 8.800 a5 5.400 0 1 0 0.200 6.400" fill="none" stroke="#e9ecee" stroke-width="1.400"/></svg>
<div class="t" style="left:136.00px;top:118.34px;font-size:12px;color:#d3d9dd;letter-spacing:-0.421px;">Sensoren</div>
<div style="position:absolute;left:71px;top:155px;width:55px;height:55px;background:rgba(255,255,255,0.095);"></div>
<div style="position:absolute;left:131px;top:155px;width:155.5px;height:55px;background:rgba(255,255,255,0.095);"></div>
<svg style="left:71px;top:155px" width="55" height="55" viewBox="0 0 55 55"><g fill="none" stroke="#e9ecee" stroke-linecap="butt">
<path d="M11 5.500 V49.200" stroke-width="2.400"/><path d="M8.500 39.500 H46" stroke-width="2.400"/><path d="M8.500 17.400 H11" stroke-width="1.600"/>
<path d="M11.500 17.400 H25.300 V10.400 H29.400 V6.600 H46" stroke-width="2.600" stroke-linejoin="miter"/>
<path d="M12 27.400 H18.100 V18" stroke-width="1.800"/></g>
<g fill="#e9ecee"><rect x="20.300" y="23" width="2.600" height="2.600"/><rect x="20.300" y="28.200" width="2.600" height="2.600"/><rect x="20.300" y="33.300" width="2.600" height="2.600"/></g></svg>
<div class="t" style="left:136.00px;top:177.34px;font-size:12px;color:#d3d9dd;letter-spacing:-0.392px;">Regler</div>
<div style="position:absolute;left:71px;top:214px;width:55px;height:55px;background:rgba(255,255,255,0.095);"></div>
<div style="position:absolute;left:131px;top:214px;width:155.5px;height:55px;background:rgba(255,255,255,0.095);"></div>
<svg style="left:71px;top:214px" width="55" height="55" viewBox="0 0 55 55"><rect x="6.500" y="6" width="42.300" height="42.800" fill="none" stroke="#e9ecee" stroke-width="2.400"/>
<circle cx="27.600" cy="27.400" r="19.300" fill="none" stroke="#e9ecee" stroke-width="2.600"/><path transform="translate(27.5 27.5) rotate(0.0)" d="M2.500 -4.800 C1.200 -9 0.800 -13 2.400 -15.600 C4.500 -18.600 9.500 -17.600 11.600 -14 C13.200 -11.300 13 -10 12.300 -9.200 C10 -6.200 8 -4.600 5.800 -3.200" fill="none" stroke="#e9ecee" stroke-width="2.200" stroke-linejoin="round" stroke-linecap="round"/><path transform="translate(27.5 27.5) rotate(60.0)" d="M2.500 -4.800 C1.200 -9 0.800 -13 2.400 -15.600 C4.500 -18.600 9.500 -17.600 11.600 -14 C13.200 -11.300 13 -10 12.300 -9.200 C10 -6.200 8 -4.600 5.800 -3.200" fill="none" stroke="#e9ecee" stroke-width="2.200" stroke-linejoin="round" stroke-linecap="round"/><path transform="translate(27.5 27.5) rotate(120.0)" d="M2.500 -4.800 C1.200 -9 0.800 -13 2.400 -15.600 C4.500 -18.600 9.500 -17.600 11.600 -14 C13.200 -11.300 13 -10 12.300 -9.200 C10 -6.200 8 -4.600 5.800 -3.200" fill="none" stroke="#e9ecee" stroke-width="2.200" stroke-linejoin="round" stroke-linecap="round"/><path transform="translate(27.5 27.5) rotate(180.0)" d="M2.500 -4.800 C1.200 -9 0.800 -13 2.400 -15.600 C4.500 -18.600 9.500 -17.600 11.600 -14 C13.200 -11.300 13 -10 12.300 -9.200 C10 -6.200 8 -4.600 5.800 -3.200" fill="none" stroke="#e9ecee" stroke-width="2.200" stroke-linejoin="round" stroke-linecap="round"/><path transform="translate(27.5 27.5) rotate(240.0)" d="M2.500 -4.800 C1.200 -9 0.800 -13 2.400 -15.600 C4.500 -18.600 9.500 -17.600 11.600 -14 C13.200 -11.300 13 -10 12.300 -9.200 C10 -6.200 8 -4.600 5.800 -3.200" fill="none" stroke="#e9ecee" stroke-width="2.200" stroke-linejoin="round" stroke-linecap="round"/><path transform="translate(27.5 27.5) rotate(300.0)" d="M2.500 -4.800 C1.200 -9 0.800 -13 2.400 -15.600 C4.500 -18.600 9.500 -17.600 11.600 -14 C13.200 -11.300 13 -10 12.300 -9.200 C10 -6.200 8 -4.600 5.800 -3.200" fill="none" stroke="#e9ecee" stroke-width="2.200" stroke-linejoin="round" stroke-linecap="round"/><circle cx="27.500" cy="27.500" r="5.600" fill="none" stroke="#e9ecee" stroke-width="2.200"/>
<g fill="#e9ecee"><circle cx="10.200" cy="9.600" r="2.700"/><circle cx="45.200" cy="9.600" r="2.700"/><circle cx="10.200" cy="45.200" r="2.700"/><circle cx="45.200" cy="45.200" r="2.700"/></g>
<g fill="#7d8791"><circle cx="10.200" cy="9.600" r="0.900"/><circle cx="45.200" cy="9.600" r="0.900"/><circle cx="10.200" cy="45.200" r="0.900"/><circle cx="45.200" cy="45.200" r="0.900"/></g></svg>
<div class="t" style="left:136.00px;top:236.34px;font-size:12px;color:#d3d9dd;letter-spacing:0.052px;">Lüfter</div>
<div style="position:absolute;left:71px;top:273px;width:55px;height:55px;background:rgba(255,255,255,0.095);"></div>
<div style="position:absolute;left:131px;top:273px;width:155.5px;height:55px;background:rgba(255,255,255,0.095);"></div>
<svg style="left:71px;top:273px" width="55" height="55" viewBox="0 0 55 55"><g fill="none" stroke="#e9ecee" stroke-width="3.200" stroke-linecap="round" stroke-linejoin="round">
<path d="M6.900 11.500 Q6.900 7.600 11 7.600 H42 Q48.100 7.600 48.100 13.700 V21.500 Q48.100 27 43 27"/>
<path d="M12.500 27 Q7.100 27 7.100 32.500 V41 Q7.100 46.400 12.500 46.400 H43 Q48 46.400 48 42"/></g>
<path d="M13.700 27.300 a5.900 5.900 0 0 1 5.900 -5.900 h2.300 v11.800 h-2.300 a5.900 5.900 0 0 1 -5.900 -5.900 z" fill="#e9ecee"/>
<rect x="21.500" y="23.900" width="6.600" height="2.300" fill="#e9ecee"/><rect x="21.500" y="28.300" width="6.600" height="2.300" fill="#e9ecee"/>
<path d="M33.100 21.400 h3.500 a5.900 5.900 0 0 1 0 11.800 h-3.500 z" fill="#e9ecee"/></svg>
<div class="t" style="left:136.00px;top:295.34px;font-size:12px;color:#d3d9dd;letter-spacing:-0.131px;">Ausgänge</div>
<div style="position:absolute;left:71px;top:332px;width:55px;height:55px;background:rgba(255,255,255,0.095);"></div>
<div style="position:absolute;left:131px;top:332px;width:155.5px;height:55px;background:rgba(255,255,255,0.095);"></div>
<svg style="left:71px;top:332px" width="55" height="55" viewBox="0 0 55 55"><path d="M27 12.900 H48.800 V24.300 H41.300 A14.700 14.700 0 0 1 27 42.300 H6.200 V31.100 H12.700 A14.700 14.700 0 0 1 27 12.900 Z" fill="none" stroke="#e9ecee" stroke-width="2.600" stroke-linejoin="miter"/>
<path d="M32.900 30.850 A6.900 6.900 0 1 1 29.300 20.900" fill="none" stroke="#e9ecee" stroke-width="2.500"/>
<path d="M29.300 17 L34.200 20.500 L29.300 24.200 Z" fill="#e9ecee"/>
<circle cx="26.900" cy="27.400" r="2.800" fill="#e9ecee"/>
<g stroke="#e9ecee" stroke-width="1.700"><path d="M35 15.500 l3.500 5.500 M38.600 15.500 l3.500 5.500 M42.200 15.500 l3.500 5.500"/><path d="M8.600 34.300 l3.300 5 M12.200 34.300 l3.300 5 M15.800 34.300 l3.300 5"/></g></svg>
<div class="t" style="left:136.00px;top:354.34px;font-size:12px;color:#d3d9dd;letter-spacing:0.051px;">Pumpen</div>
<div style="position:absolute;left:71px;top:391px;width:55px;height:55px;background:rgba(255,255,255,0.095);"></div>
<div style="position:absolute;left:131px;top:391px;width:155.5px;height:55px;background:rgba(255,255,255,0.095);"></div>
<svg style="left:71px;top:391px" width="55" height="55" viewBox="0 0 55 55"><path d="M11.900 10.500 L45.600 44.250" stroke="#e9ecee" stroke-width="2.300" fill="none"/>
<circle cx="17.750" cy="38.250" r="9.700" fill="none" stroke="#e9ecee" stroke-width="2.400"/>
<path d="M17.750 28.500 a9.750 9.750 0 0 1 0 19.500 z" fill="#e9ecee"/>
<circle cx="38.500" cy="16" r="3" fill="none" stroke="#e9ecee" stroke-width="1.900"/>
<g stroke="#e9ecee" stroke-width="2.300" stroke-linecap="butt"><path d="M38.500 5 v6.300 M38.500 20.700 v6.300 M27.500 16 h6.300 M43.200 16 h6.300 M30.700 8.200 l4.450 4.450 M41.850 19.350 l4.450 4.450 M46.300 8.200 l-4.450 4.450 M35.150 19.350 l-4.450 4.450"/></g></svg>
<div class="t" style="left:136.00px;top:413.34px;font-size:12px;color:#d3d9dd;letter-spacing:-0.115px;">Benutzeroberfläche</div>
<div style="position:absolute;left:71px;top:450px;width:55px;height:55px;background:rgba(255,255,255,0.095);"></div>
<div style="position:absolute;left:131px;top:450px;width:155.5px;height:55px;background:rgba(255,255,255,0.095);"></div>
<svg style="left:71px;top:450px" width="55" height="55" viewBox="0 0 55 55"><g fill="none" stroke="#e9ecee" stroke-width="2.500" stroke-linejoin="miter">
<path d="M16.200 14.200 H48.500 V26.800 H16.200 Z"/>
<path d="M16.200 20.500 H11.200 V33.700 H43.800 V26.800"/>
<path d="M11.200 27.300 H6.800 V40.300 H39.400 V33.700"/></g>
<path d="M20.200 20 l2 -1.400 v6.800" fill="none" stroke="#e9ecee" stroke-width="1.100" opacity="0.700"/></svg>
<div class="t" style="left:136.00px;top:472.34px;font-size:12px;color:#d3d9dd;letter-spacing:-0.184px;">Anzeigeseiten</div>
<div style="position:absolute;left:71px;top:509px;width:55px;height:55px;background:rgba(255,255,255,0.095);"></div>
<div style="position:absolute;left:131px;top:509px;width:155.5px;height:55px;background:rgba(255,255,255,0.095);"></div>
<svg style="left:71px;top:509px" width="55" height="55" viewBox="0 0 55 55"><path d="M23.800 10.200 Q27.500 3.400 31.200 10.200 L42.300 31 Q46 37.900 38.600 37.900 H16.400 Q9 37.900 12.700 31 Z" fill="none" stroke="#e9ecee" stroke-width="2.800" stroke-linejoin="round"/>
<path d="M27.500 14.400 V25.200" stroke="#e9ecee" stroke-width="3.600" stroke-linecap="round"/><circle cx="27.500" cy="31.400" r="2" fill="#e9ecee"/><g stroke="#e9ecee" fill="none"><path d="M5 46.600 H50" stroke-width="1.100"/><path d="M5 49.100 H36" stroke-width="2.100"/><path d="M5.500 44 v3 M16.250 44.500 v2 M27.500 44.500 v2 M38.500 44.500 v2 M49.500 44 v3" stroke-width="1"/></g></svg>
<div class="t" style="left:136.00px;top:531.34px;font-size:12px;color:#d3d9dd;letter-spacing:0.052px;">Alarmeinstellungen</div>
<div style="position:absolute;left:71px;top:568px;width:55px;height:55px;background:rgba(255,255,255,0.095);"></div>
<div style="position:absolute;left:131px;top:568px;width:155.5px;height:55px;background:rgba(255,255,255,0.095);"></div>
<svg style="left:71px;top:568px" width="55" height="55" viewBox="0 0 55 55"><path d="M23.800 10.200 Q27.500 3.400 31.200 10.200 L42.300 31 Q46 37.900 38.600 37.900 H16.400 Q9 37.900 12.700 31 Z" fill="none" stroke="#e9ecee" stroke-width="2.800" stroke-linejoin="round"/>
<path d="M27.500 14.400 V25.200" stroke="#e9ecee" stroke-width="3.600" stroke-linecap="round"/><circle cx="27.500" cy="31.400" r="2" fill="#e9ecee"/><g fill="#e9ecee"><rect x="8.100" y="44.250" width="5.600" height="5.600" rx="0.900"/><rect x="16" y="44.250" width="5.600" height="5.600" rx="0.900"/><rect x="24" y="44.250" width="5.600" height="5.600" rx="0.900"/></g>
<g fill="none" stroke="#e9ecee" stroke-width="1.200"><rect x="32.700" y="44.850" width="4.600" height="4.600" rx="1.400"/><rect x="40.600" y="44.850" width="4.600" height="4.600" rx="1.400"/></g></svg>
<div class="t" style="left:136.00px;top:590.34px;font-size:12px;color:#d3d9dd;letter-spacing:0.100px;">Alarmaktionen</div>
<div style="position:absolute;left:71px;top:627px;width:55px;height:55px;background:rgba(255,255,255,0.095);"></div>
<div style="position:absolute;left:131px;top:627px;width:155.5px;height:55px;background:rgba(255,255,255,0.095);"></div>
<svg style="left:71px;top:627px" width="55" height="55" viewBox="0 0 55 55"><circle cx="27.500" cy="27.250" r="21.500" fill="none" stroke="#e9ecee" stroke-width="2.100"/><circle cx="36.30" cy="12.01" r="1.250" fill="#e9ecee"/><circle cx="42.74" cy="18.45" r="1.250" fill="#e9ecee"/><circle cx="45.10" cy="27.25" r="1.250" fill="#e9ecee"/><circle cx="42.74" cy="36.05" r="1.250" fill="#e9ecee"/><circle cx="36.30" cy="42.49" r="1.250" fill="#e9ecee"/><circle cx="27.50" cy="44.85" r="1.250" fill="#e9ecee"/><circle cx="18.70" cy="42.49" r="1.250" fill="#e9ecee"/><circle cx="12.26" cy="36.05" r="1.250" fill="#e9ecee"/><circle cx="9.90" cy="27.25" r="1.250" fill="#e9ecee"/><circle cx="12.26" cy="18.45" r="1.250" fill="#e9ecee"/><circle cx="18.70" cy="12.01" r="1.250" fill="#e9ecee"/>
<path d="M27.300 28.500 V13" stroke="#e9ecee" stroke-width="2.600"/><path d="M24.300 14.500 l3 -6.300 l3 6.300 z" fill="#e9ecee"/>
<path d="M26.500 28.800 L36 23" stroke="#e9ecee" stroke-width="2.600"/><path d="M33.600 20.400 l5.700 0.100 l-2.900 5 z" fill="#e9ecee"/><circle cx="26.800" cy="28.300" r="2.100" fill="#e9ecee"/></svg>
<div class="t" style="left:136.00px;top:649.34px;font-size:12px;color:#d3d9dd;letter-spacing:0.023px;">Zeitschaltuhr</div>
<div style="position:absolute;left:71px;top:686px;width:55px;height:55px;background:rgba(255,255,255,0.095);"></div>
<div style="position:absolute;left:131px;top:686px;width:155.5px;height:55px;background:rgba(255,255,255,0.095);"></div>
<svg style="left:71px;top:686px" width="55" height="55" viewBox="0 0 55 55"><circle cx="13.750" cy="22.750" r="6.200" fill="none" stroke="#e9ecee" stroke-width="3"/><circle cx="13.750" cy="22.750" r="2.100" fill="none" stroke="#e9ecee" stroke-width="1.300"/>
<circle cx="34.750" cy="26.750" r="12.600" fill="none" stroke="#e9ecee" stroke-width="3"/><circle cx="34.750" cy="26.750" r="14.100" fill="none" stroke="#e9ecee" stroke-width="1.200" stroke-dasharray="2.900 2.100"/>
<circle cx="34.750" cy="26.750" r="4.300" fill="#e9ecee"/></svg>
<div class="t" style="left:136.00px;top:708.34px;font-size:12px;color:#d3d9dd;letter-spacing:-0.335px;">System</div>
<svg style="left:0;top:0" width="80" height="1008" viewBox="0 0 80 1008" shape-rendering="crispEdges"><rect x="61" y="157" width="2" height="2" fill="rgba(255,255,255,0.56)"/><rect x="65" y="157" width="2" height="2" fill="rgba(255,255,255,0.56)"/><rect x="61" y="161" width="2" height="2" fill="rgba(255,255,255,0.56)"/><rect x="65" y="161" width="2" height="2" fill="rgba(255,255,255,0.56)"/><rect x="61" y="165" width="2" height="2" fill="rgba(255,255,255,0.56)"/><rect x="65" y="165" width="2" height="2" fill="rgba(255,255,255,0.56)"/><rect x="61" y="169" width="2" height="2" fill="rgba(255,255,255,0.56)"/><rect x="65" y="169" width="2" height="2" fill="rgba(255,255,255,0.56)"/><rect x="61" y="173" width="2" height="2" fill="rgba(255,255,255,0.56)"/><rect x="65" y="173" width="2" height="2" fill="rgba(255,255,255,0.56)"/><rect x="61" y="177" width="2" height="2" fill="rgba(255,255,255,0.56)"/><rect x="65" y="177" width="2" height="2" fill="rgba(255,255,255,0.56)"/><rect x="61" y="181" width="2" height="2" fill="rgba(255,255,255,0.56)"/><rect x="65" y="181" width="2" height="2" fill="rgba(255,255,255,0.56)"/><rect x="61" y="185" width="2" height="2" fill="rgba(255,255,255,0.56)"/><rect x="65" y="185" width="2" height="2" fill="rgba(255,255,255,0.56)"/><rect x="61" y="189" width="2" height="2" fill="rgba(255,255,255,0.56)"/><rect x="65" y="189" width="2" height="2" fill="rgba(255,255,255,0.56)"/><rect x="61" y="193" width="2" height="2" fill="rgba(255,255,255,0.56)"/><rect x="65" y="193" width="2" height="2" fill="rgba(255,255,255,0.56)"/><rect x="61" y="197" width="2" height="2" fill="rgba(255,255,255,0.56)"/><rect x="65" y="197" width="2" height="2" fill="rgba(255,255,255,0.56)"/><rect x="61" y="201" width="2" height="2" fill="rgba(255,255,255,0.56)"/><rect x="65" y="201" width="2" height="2" fill="rgba(255,255,255,0.56)"/><rect x="61" y="205" width="2" height="2" fill="rgba(255,255,255,0.56)"/><rect x="65" y="205" width="2" height="2" fill="rgba(255,255,255,0.56)"/><rect x="61" y="209" width="2" height="2" fill="rgba(255,255,255,0.56)"/><rect x="65" y="209" width="2" height="2" fill="rgba(255,255,255,0.56)"/></svg>
<div style="position:absolute;left:51px;top:748px;width:234.8px;height:49.5px;background:rgba(190,200,205,0.450);"></div>
<div class="t" style="left:56.00px;top:756.96px;font-size:16px;color:#f4f6f7;letter-spacing:-0.076px;">mps</div>
<div class="t" style="left:56.00px;top:776.96px;font-size:16px;color:#f4f6f7;letter-spacing:-0.158px;">Durchfluss</div>
<div class="abs" style="left:236px;top:772.5px;width:20px;height:20px;box-sizing:border-box;background:#46558c;border:1px solid rgba(215,228,235,0.700);border-radius:2px;"></div>
<svg style="left:236px;top:772.5px" width="20" height="20" viewBox="0 0 20 20"><rect x="2" y="2" width="16" height="16" fill="#4a5a90"/><rect x="3.500" y="2" width="13" height="2.400" fill="#cf5a55"/><rect x="3.500" y="4.600" width="13" height="6.400" fill="#f1f1f4"/><rect x="5" y="7" width="10" height="1" fill="#d0d2dc"/><rect x="6" y="12.500" width="8" height="5.500" fill="#5b6386"/><rect x="8" y="13.500" width="2" height="3.500" fill="#e0e2ea"/><rect x="2" y="16.500" width="16" height="1.500" fill="#2b3564"/></svg>
<div class="abs" style="left:261px;top:772.5px;width:20px;height:20px;box-sizing:border-box;background:rgba(125,130,172,0.620);border:1px solid rgba(215,228,235,0.600);border-radius:2px;"></div>
<svg style="left:261px;top:772.5px" width="20" height="20" viewBox="0 0 20 20"><polygon points="17.07,11.37 13.84,12.54 14.03,15.97 10.92,14.51 8.63,17.07 7.46,13.84 4.03,14.03 5.49,10.92 2.93,8.63 6.16,7.46 5.97,4.03 9.08,5.49 11.37,2.93 12.54,6.16 15.97,5.97 14.51,9.08" fill="#c6c7df" stroke="#b0b4d2" stroke-width="1.400" opacity="0.900" stroke-linejoin="round"/><circle cx="10" cy="10" r="2.300" fill="#6f77a0"/></svg>
<div style="position:absolute;left:51px;top:803.5px;width:234.8px;height:49.5px;background:rgba(190,200,205,0.450);"></div>
<div class="t" style="left:56.00px;top:812.46px;font-size:16px;color:#f4f6f7;letter-spacing:-0.076px;">mps</div>
<div class="t" style="left:56.00px;top:832.46px;font-size:16px;color:#f4f6f7;letter-spacing:-0.325px;">Füllstand</div>
<div class="abs" style="left:236px;top:828px;width:20px;height:20px;box-sizing:border-box;background:#46558c;border:1px solid rgba(215,228,235,0.700);border-radius:2px;"></div>
<svg style="left:236px;top:828px" width="20" height="20" viewBox="0 0 20 20"><rect x="2" y="2" width="16" height="16" fill="#4a5a90"/><rect x="3.500" y="2" width="13" height="2.400" fill="#cf5a55"/><rect x="3.500" y="4.600" width="13" height="6.400" fill="#f1f1f4"/><rect x="5" y="7" width="10" height="1" fill="#d0d2dc"/><rect x="6" y="12.500" width="8" height="5.500" fill="#5b6386"/><rect x="8" y="13.500" width="2" height="3.500" fill="#e0e2ea"/><rect x="2" y="16.500" width="16" height="1.500" fill="#2b3564"/></svg>
<div class="abs" style="left:261px;top:828px;width:20px;height:20px;box-sizing:border-box;background:rgba(125,130,172,0.620);border:1px solid rgba(215,228,235,0.600);border-radius:2px;"></div>
<svg style="left:261px;top:828px" width="20" height="20" viewBox="0 0 20 20"><polygon points="17.07,11.37 13.84,12.54 14.03,15.97 10.92,14.51 8.63,17.07 7.46,13.84 4.03,14.03 5.49,10.92 2.93,8.63 6.16,7.46 5.97,4.03 9.08,5.49 11.37,2.93 12.54,6.16 15.97,5.97 14.51,9.08" fill="#c6c7df" stroke="#b0b4d2" stroke-width="1.400" opacity="0.900" stroke-linejoin="round"/><circle cx="10" cy="10" r="2.300" fill="#6f77a0"/></svg>
<div style="position:absolute;left:71px;top:855px;width:55px;height:55px;background:rgba(255,255,255,0.060);"></div>
<div style="position:absolute;left:131px;top:855px;width:155.5px;height:55px;background:rgba(255,255,255,0.060);"></div>
<svg style="left:71px;top:855px" width="55" height="55" viewBox="0 0 55 55"><path d="M17.500 10 a3.100 3.100 0 0 1 6.200 0 V30.900 a9.100 9.100 0 1 1 -6.200 0 Z" fill="none" stroke="#e9ecee" stroke-width="2.700" stroke-linejoin="round"/>
<circle cx="20.600" cy="39.500" r="5.500" fill="#e9ecee"/><rect x="19.500" y="14.500" width="2.200" height="22" fill="#e9ecee"/><rect x="19.700" y="8.500" width="1.800" height="5" fill="#8a949d"/>
<circle cx="31.500" cy="8.900" r="1.800" fill="none" stroke="#e9ecee" stroke-width="1.100"/>
<path d="M44 8.800 a5 5.400 0 1 0 0.200 6.400" fill="none" stroke="#e9ecee" stroke-width="1.400"/></svg>
<div class="t" style="left:136.00px;top:877.34px;font-size:12px;color:#d3d9dd;letter-spacing:-0.081px;">Einstellungen</div>
<div style="position:absolute;left:71px;top:914px;width:55px;height:55px;background:rgba(255,255,255,0.060);"></div>
<div style="position:absolute;left:131px;top:914px;width:155.5px;height:55px;background:rgba(255,255,255,0.060);"></div>
<svg style="left:71px;top:914px" width="55" height="55" viewBox="0 0 55 55"><path d="M23.800 10.200 Q27.500 3.400 31.200 10.200 L42.300 31 Q46 37.900 38.600 37.900 H16.400 Q9 37.900 12.700 31 Z" fill="none" stroke="#e9ecee" stroke-width="2.800" stroke-linejoin="round"/>
<path d="M27.500 14.400 V25.200" stroke="#e9ecee" stroke-width="3.600" stroke-linecap="round"/><circle cx="27.500" cy="31.400" r="2" fill="#e9ecee"/><g stroke="#e9ecee" fill="none"><path d="M5 46.600 H50" stroke-width="1.100"/><path d="M5 49.100 H36" stroke-width="2.100"/><path d="M5.500 44 v3 M16.250 44.500 v2 M27.500 44.500 v2 M38.500 44.500 v2 M49.500 44 v3" stroke-width="1"/></g></svg>
<div class="t" style="left:136.00px;top:936.34px;font-size:12px;color:#d3d9dd;letter-spacing:0.052px;">Alarmeinstellungen</div>
<div style="position:absolute;left:71px;top:973px;width:55px;height:35px;background:rgba(255,255,255,0.060);"></div>
<div style="position:absolute;left:131px;top:973px;width:155.5px;height:35px;background:rgba(255,255,255,0.060);"></div>
<svg style="left:71px;top:973px" width="55" height="35" viewBox="0 0 55 35"><circle cx="13.750" cy="22.750" r="6.200" fill="none" stroke="#e9ecee" stroke-width="3"/><circle cx="13.750" cy="22.750" r="2.100" fill="none" stroke="#e9ecee" stroke-width="1.300"/>
<circle cx="34.750" cy="26.750" r="12.600" fill="none" stroke="#e9ecee" stroke-width="3"/><circle cx="34.750" cy="26.750" r="14.100" fill="none" stroke="#e9ecee" stroke-width="1.200" stroke-dasharray="2.900 2.100"/>
<circle cx="34.750" cy="26.750" r="4.300" fill="#e9ecee"/></svg>
<div class="t" style="left:136.00px;top:995.34px;font-size:12px;color:#d3d9dd;letter-spacing:-0.335px;">System</div>
<svg style="left:0;top:0" width="80" height="1008" viewBox="0 0 80 1008" shape-rendering="crispEdges"><rect x="61" y="857" width="2" height="2" fill="rgba(255,255,255,0.37)"/><rect x="65" y="857" width="2" height="2" fill="rgba(255,255,255,0.37)"/><rect x="61" y="861" width="2" height="2" fill="rgba(255,255,255,0.37)"/><rect x="65" y="861" width="2" height="2" fill="rgba(255,255,255,0.37)"/><rect x="61" y="865" width="2" height="2" fill="rgba(255,255,255,0.37)"/><rect x="65" y="865" width="2" height="2" fill="rgba(255,255,255,0.37)"/><rect x="61" y="869" width="2" height="2" fill="rgba(255,255,255,0.37)"/><rect x="65" y="869" width="2" height="2" fill="rgba(255,255,255,0.37)"/><rect x="61" y="873" width="2" height="2" fill="rgba(255,255,255,0.37)"/><rect x="65" y="873" width="2" height="2" fill="rgba(255,255,255,0.37)"/><rect x="61" y="877" width="2" height="2" fill="rgba(255,255,255,0.37)"/><rect x="65" y="877" width="2" height="2" fill="rgba(255,255,255,0.37)"/><rect x="61" y="881" width="2" height="2" fill="rgba(255,255,255,0.37)"/><rect x="65" y="881" width="2" height="2" fill="rgba(255,255,255,0.37)"/><rect x="61" y="885" width="2" height="2" fill="rgba(255,255,255,0.37)"/><rect x="65" y="885" width="2" height="2" fill="rgba(255,255,255,0.37)"/><rect x="61" y="889" width="2" height="2" fill="rgba(255,255,255,0.37)"/><rect x="65" y="889" width="2" height="2" fill="rgba(255,255,255,0.37)"/><rect x="61" y="893" width="2" height="2" fill="rgba(255,255,255,0.37)"/><rect x="65" y="893" width="2" height="2" fill="rgba(255,255,255,0.37)"/><rect x="61" y="897" width="2" height="2" fill="rgba(255,255,255,0.37)"/><rect x="65" y="897" width="2" height="2" fill="rgba(255,255,255,0.37)"/><rect x="61" y="901" width="2" height="2" fill="rgba(255,255,255,0.37)"/><rect x="65" y="901" width="2" height="2" fill="rgba(255,255,255,0.37)"/><rect x="61" y="905" width="2" height="2" fill="rgba(255,255,255,0.37)"/><rect x="65" y="905" width="2" height="2" fill="rgba(255,255,255,0.37)"/><rect x="61" y="909" width="2" height="2" fill="rgba(255,255,255,0.37)"/><rect x="65" y="909" width="2" height="2" fill="rgba(255,255,255,0.37)"/></svg>
<svg style="left:0;top:0" width="60" height="1008" viewBox="0 0 60 1008"><text transform="translate(34 983.500) rotate(-90)" font-family="Liberation Sans, sans-serif" font-size="30" fill="rgba(205,228,232,0.580)" textLength="215" lengthAdjust="spacing">aquacomputer</text></svg>
<div class="abs" style="left:0;top:1008px;width:1911px;height:33px;background:linear-gradient(to bottom,#030407 0,#07090d 4.500px,#0b0d12 5px,#181c25 6px,#1b202a 9px,#191d27 15px,#0f1218 16px,#0c0e14 20px,#0b0d12 33px);overflow:hidden;"></div>
<div style="position:absolute;left:0px;top:1012.5px;width:1911px;height:1px;background:rgba(255,255,255,0.045);"></div>
<svg style="left:0;top:1008px" width="1911" height="33" viewBox="0 1008 1911 33"><defs>
<radialGradient id="sph" cx="0.4" cy="0.3" r="0.7"><stop offset="0" stop-color="#6d7078"/><stop offset="0.45" stop-color="#33363d"/><stop offset="1" stop-color="#111318"/></radialGradient>
<linearGradient id="red64" x1="0" y1="0" x2="0" y2="1"><stop offset="0" stop-color="#d0605a"/><stop offset="0.35" stop-color="#b82418"/><stop offset="1" stop-color="#8f130c"/></linearGradient>
<linearGradient id="startg" x1="0" y1="0" x2="1" y2="0"><stop offset="0" stop-color="#d0d2d8"/><stop offset="1" stop-color="#8e9098"/></linearGradient>
<clipPath id="tbclip"><rect x="0" y="1013.500" width="1911" height="28"/></clipPath><clipPath id="tbclip2"><rect x="0" y="1016.200" width="1911" height="25"/></clipPath><clipPath id="tbclip3"><rect x="0" y="1015.800" width="1911" height="25"/></clipPath>
</defs><rect x="7" y="1017.500" width="30" height="16.500" rx="3.500" fill="#05060a" stroke="#b4b7bf" stroke-width="2.300"/><path d="M7 1021 q0 -3.500 3.500 -3.500 h2 v16.500 h-2 q-3.500 0 -3.500 -3.500 z" fill="url(#startg)"/><path d="M20.800 1016.400 V1029.500 M20.800 1022.800 q0 -4.700 4.750 -4.700 q4.750 0 4.750 4.700 V1029.500" fill="none" stroke="#f2f2f4" stroke-width="3.500"/><rect x="47.5" y="1015" width="1" height="26" fill="#2c3038"/><rect x="46.5" y="1015" width="1" height="26" fill="#05060a"/><ellipse cx="83.7" cy="1025.500" rx="11.800" ry="9.800" fill="url(#sph)"/><path d="M79.7 1019 q5 -3.500 11 -2 q-2 4 -7 5 q-3 0 -4 -3 z" fill="#0a0b0e"/><path d="M73.7 1027 q8 3 19 -3" fill="none" stroke="#7b7e86" stroke-width="1.400" opacity="0.800"/><path d="M75.7 1030.500 q7 2.500 15 -1" fill="none" stroke="#4a4d55" stroke-width="1.200"/><path d="M131 1022 L150 1016.500 L162 1018 L146 1036.500 L134 1030 Z" fill="#1d1e22"/><path d="M150 1016.500 L162 1018 L147 1034.500 L140 1025 Z" fill="#2b2c31"/><path d="M132.500 1024.500 L143.500 1031.800 L144.500 1029.200 L133.500 1022.300 Z" fill="#e9d9a3"/><path d="M132.500 1024.500 L143.500 1031.800" stroke="#b89c50" stroke-width="0.800"/><rect x="200" y="1016" width="20.400" height="19.500" fill="#a5d0ee"/><rect x="196.500" y="1017.200" width="20.400" height="19.600" fill="#7db7e4"/><rect x="193.600" y="1016.200" width="20.500" height="19.400" fill="#62a5dc"/><circle cx="204.700" cy="1025" r="8.300" fill="#f07a22"/><circle cx="204.700" cy="1025" r="6.300" fill="#f8963e"/><path d="M201.600 1019.600 L211.300 1025 L201.600 1030.400 Z" fill="#fff"/><path d="M242.6 1014 V1037.500 Q242.6 1039.300 244.6 1039.300 H295.6 Q297.6 1039.300 297.6 1037.500 V1014" fill="rgba(255,255,255,0.015)" stroke="#30343d" stroke-width="1"/><path d="M299.1 1014 V1041" stroke="#3a3e47" stroke-width="0.800" opacity="0.700"/><ellipse cx="269.4" cy="1025.500" rx="11.800" ry="9.800" fill="url(#sph)"/><path d="M265.4 1019 q5 -3.500 11 -2 q-2 4 -7 5 q-3 0 -4 -3 z" fill="#0a0b0e"/><path d="M259.4 1027 q8 3 19 -3" fill="none" stroke="#7b7e86" stroke-width="1.400" opacity="0.800"/><path d="M261.4 1030.500 q7 2.500 15 -1" fill="none" stroke="#4a4d55" stroke-width="1.200"/><ellipse cx="328.500" cy="1021" rx="10.500" ry="6.500" fill="#c9726e"/><ellipse cx="328" cy="1018.500" rx="8.500" ry="4" fill="#ecd3d1"/><path d="M319 1022 h14 l-2 8 l-3 -3 l-2 6 l-2 -5 l-3 2 z" fill="#b45a56"/><path d="M326 1016 L337.500 1030 M339 1016 L330 1030" stroke="#dfe6ee" stroke-width="1.600" clip-path="url(#tbclip)"/><ellipse cx="341.500" cy="1030.500" rx="4.500" ry="2.800" transform="rotate(40 341.500 1030.500)" fill="none" stroke="#7f9cc0" stroke-width="1.700"/><ellipse cx="333.500" cy="1034.500" rx="2.600" ry="4.500" transform="rotate(-12 333.500 1034.500)" fill="none" stroke="#7f9cc0" stroke-width="1.700"/><rect x="379.300" y="1015.800" width="30.700" height="23.500" fill="url(#red64)"/><text x="394.700" y="1033.200" font-family="Liberation Sans, sans-serif" font-weight="bold" font-size="24.500" fill="#fff" text-anchor="middle" textLength="26.500" lengthAdjust="spacingAndGlyphs">64</text><path d="M429 1014 V1037.500 Q429 1039.300 431 1039.300 H481.3 Q483.3 1039.300 483.3 1037.500 V1014" fill="rgba(255,255,255,0.015)" stroke="#30343d" stroke-width="1"/><path d="M484.8 1014 V1041" stroke="#3a3e47" stroke-width="0.800" opacity="0.700"/><g clip-path="url(#tbclip3)"><circle cx="455.500" cy="1026.500" r="12" fill="none" stroke="#2a86d6" stroke-width="3.200"/><path d="M446 1023 q3 -5 9.500 -6.500 h13 v9 l-6 2 l-8 -4 z" fill="#3b9be2"/><path d="M446 1024.500 q5 -3.500 10 0.500 q4 3 7.500 -1 q3 -3 6.500 -2 v11 q-3 -3 -6 1 q-4 4.500 -10 4 q-7 -1 -8 -8 z" fill="#f7c600"/></g><text x="1660.700" y="1026" font-family="Liberation Sans, sans-serif" font-size="12.400" fill="#c9cbd0" textLength="14.800" lengthAdjust="spacingAndGlyphs">DE</text><path d="M1692.300 1027 L1696.300 1021.800 L1700.300 1027 Z" fill="#dcdde0"/><ellipse cx="1720.500" cy="1022.500" rx="6.200" ry="4.600" fill="#c9807a"/><ellipse cx="1720.500" cy="1020.800" rx="4.600" ry="2.400" fill="#ecd9d6"/><path d="M1715 1024 h9 l-2 5 l-2.500 -2 l-2 3 z" fill="#b3605a"/><path d="M1719 1019 L1725 1030 M1725 1019 L1721 1030" stroke="#dfe6ee" stroke-width="1"/><circle cx="1725.500" cy="1030" r="1.700" fill="none" stroke="#6f8fc0" stroke-width="1"/><circle cx="1721" cy="1031" r="1.500" fill="none" stroke="#6f8fc0" stroke-width="1"/><rect x="1743.700" y="1018.300" width="1.300" height="13.800" fill="#f0f0f0"/><path d="M1745.800 1019.300 h5.800 v1.400 l3 0.200 l3.300 -0.600 l-1.600 4.800 q-2.500 1.300 -4.700 0 v-0.800 h-5.800 z" fill="#f4f4f4"/><path d="M1751.600 1020.700 v4.400" stroke="#10131a" stroke-width="0.800"/><rect x="1771.500" y="1020.800" width="10" height="8" fill="#3a3d44" stroke="#f0f0f0" stroke-width="1.300"/><path d="M1776.500 1029 v2 M1772.500 1031.700 h8.500" stroke="#f0f0f0" stroke-width="1.300"/><path d="M1768.200 1018.300 v3 M1770.600 1018.300 v3 M1767.700 1021 h3.500 v2.600 h-3.500 z M1769.400 1023.600 v7.500 h2.500" fill="none" stroke="#f0f0f0" stroke-width="1.100"/><path d="M1791.500 1022.500 h3 l5 -4.200 v13.600 l-5 -4.200 h-3 z" fill="#e8e8e8"/><path d="M1801 1022.500 q1.700 2.500 0 5 M1802.800 1020.500 q3 4.500 0 9 M1804.600 1018.800 q4 6.200 0 12.400" fill="none" stroke="#e8e8e8" stroke-width="1"/><g clip-path="url(#tbclip2)"><text x="1857.300" y="1021" font-family="Liberation Serif, serif" font-weight="bold" font-size="13.500" fill="#9a9ca2" text-anchor="middle">18:51</text></g><text x="1857.300" y="1038.100" font-family="Liberation Serif, serif" font-weight="bold" font-size="13.500" fill="#eceef2" text-anchor="middle" textLength="60.700" lengthAdjust="spacingAndGlyphs">25.10.2012</text><rect x="1903" y="1014" width="1" height="27" fill="#3b4350"/><rect x="1904" y="1014" width="7" height="27" fill="rgba(60,85,115,0.350)"/></svg>
</body></html>
